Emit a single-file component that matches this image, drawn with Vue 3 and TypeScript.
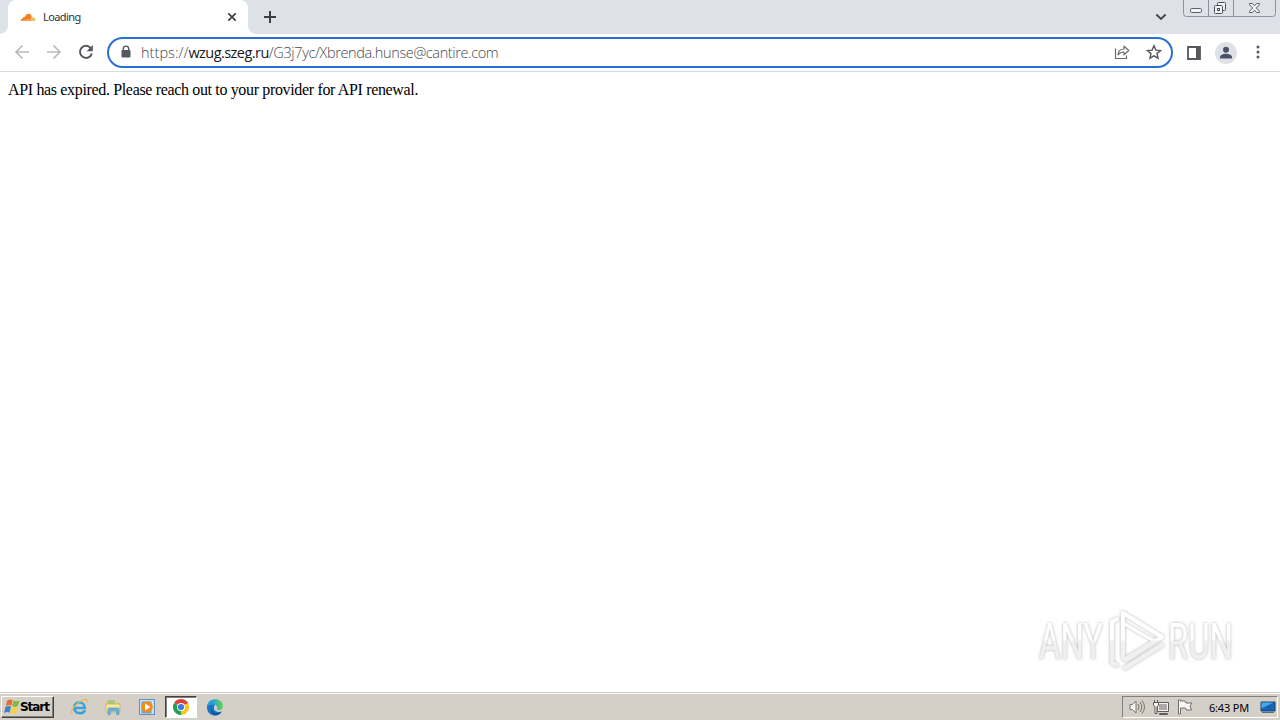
<script setup lang="ts">
const tabTitle: string = 'Loading'
const url = { scheme: 'https://', host: 'wzug.szeg.ru', path: '/G3j7yc/Xbrenda.hunse@cantire.com' }
const message: string = 'API has expired. Please reach out to your provider for API renewal.'
const clock: string = '6:43 PM'
</script>

<template>
  <div class="desktop">
    <header class="tabstrip">
      <div class="tab">
        <svg class="favicon" width="16" height="16" viewBox="0 0 16 16">
          <path d="M.8 11.8c-.1-1.6 1-2.5 2.3-2.5-.1-1.3 1-1.9 1.9-1.3C5.8 5.5 7.2 4.500 8.900 4.700c1.600.2 2.700 1.400 2.900 3L11 11.800Z" fill="#f38020" />
          <path d="M11.900 8.200c2-.2 3.600 1.200 3.500 3.600h-4.700l.4-1.200 2.500-.3-2.300-.4Z" fill="#faae40" />
          <path d="m4.800 10.600 6-.3" stroke="#f9b26b" stroke-width=".6" />
        </svg>
        <span class="tab-title">{{ tabTitle }}</span>
        <svg class="tab-close" width="10" height="10" viewBox="0 0 10 10"><path d="m1.300 1.300 7.400 7.400m0-7.400L1.300 8.700" stroke="#3c4043" stroke-width="1.700" /></svg>
      </div>
      <svg class="new-tab" width="14" height="14" viewBox="0 0 14 14"><path d="M7 1v12M1 7h12" stroke="#3c4043" stroke-width="2" /></svg>
      <svg class="chevron" width="12" height="8" viewBox="0 0 12 8"><path d="m1.400 1.500 4.600 4.400 4.600-4.400" fill="none" stroke="#45484d" stroke-width="2" /></svg>
      <svg class="window-controls" width="94" height="18" viewBox="0 0 94 18">
        <path d="M.5-1v14.500q0 3 3 3h86q3 0 3-3V-1M25.500 0v16M50.500 0v16" fill="none" stroke="#8d929c" />
        <rect x="7.500" y="8.500" width="11" height="4" rx="1.300" fill="#f2f3f6" stroke="#5b606b" />
        <g fill="#f2f3f6" stroke="#4b505b"><rect x="34.500" y="2.500" width="8" height="8" rx="1" /><rect x="31.500" y="5.500" width="8" height="8" rx="1" /><rect x="34.500" y="8.500" width="2" height="2" /></g>
        <path d="M66.500 3.500h3l2 2.300 2-2.300h3v1.200L73.300 8l3.200 3.300v1.200h-3l-2-2.300-2 2.300h-3v-1.200L69.700 8l-3.200-3.300Z" fill="#f2f3f6" stroke="#5b606b" />
      </svg>
    </header>

    <nav class="toolbar">
      <svg class="nav-icon" width="16" height="16" viewBox="0 0 16 16"><path d="M15 8H2m6.500-6.500L2 8l6.500 6.500" fill="none" stroke="#b8babd" stroke-width="1.700" /></svg>
      <svg class="nav-icon" width="16" height="16" viewBox="0 0 16 16"><path d="M1 8h13M7.500 1.500 14 8l-6.500 6.500" fill="none" stroke="#b8babd" stroke-width="1.700" /></svg>
      <svg class="nav-icon" width="16" height="16" viewBox="0 0 16 16"><path d="M13.800 9.400A6 6 0 1 1 12.600 4L14 5.400" fill="none" stroke="#55585c" stroke-width="2" /><path d="M14.800 1v6.200H8.600Z" fill="#55585c" /></svg>
      <div class="omnibox">
        <svg class="lock" width="10" height="14" viewBox="0 0 10 14"><path d="M2.300 6V3.800a2.700 2.700 0 0 1 5.400 0V6" fill="none" stroke="#55585c" stroke-width="1.400" /><rect x=".5" y="5" width="9" height="7.500" rx="1" fill="#55585c" /></svg>
        <span class="url"><span class="scheme">{{ url.scheme }}</span><b>{{ url.host }}</b>{{ url.path }}</span>
        <svg class="share" width="16" height="16" viewBox="0 0 16 16"><path d="M1.500 4.500v10h11v-3" fill="none" stroke="#696c70" stroke-width="1.200" /><path d="M4 10.800C4.300 7.200 6.500 5 10 5V2.200L14.800 6.500 10 10.800V8C7.300 8 5.400 8.900 4 10.800Z" fill="none" stroke="#696c70" stroke-width="1.200" stroke-linejoin="round" /></svg>
        <svg class="star" width="16" height="16" viewBox="0 0 16 16"><path d="m8 1.700 1.900 4.400 4.700.4-3.600 3.100 1.100 4.600L8 11.800l-4.100 2.400L5 9.600 1.400 6.500l4.700-.4Z" fill="none" stroke="#55585c" stroke-width="1.400" /></svg>
      </div>
      <svg class="panel" width="14" height="14" viewBox="0 0 14 14"><path d="M1 1h12v12H1Z" fill="none" stroke="#55585c" stroke-width="1.800" /><path d="M9 1h4v12H9Z" fill="#55585c" /></svg>
      <svg class="avatar" width="22" height="22" viewBox="0 0 22 22"><circle cx="11" cy="11" r="11" fill="#dee1e6" /><circle cx="11" cy="7.800" r="3" fill="#4b5268" /><path d="M5 16.500v-1.300c0-2.200 3.400-3.400 6-3.400s6 1.200 6 3.400v1.300Z" fill="#4b5268" /></svg>
      <svg class="menu" width="4" height="16" viewBox="0 0 4 16"><g fill="#55585c"><circle cx="2" cy="3" r="1.500" /><circle cx="2" cy="8" r="1.500" /><circle cx="2" cy="13" r="1.500" /></g></svg>
    </nav>

    <main class="page">
      <p>{{ message }}</p>
      <svg class="watermark" width="220" height="84" viewBox="0 0 220 84">
        <defs>
          <linearGradient id="fade" x1="0" y1="0" x2="0" y2="76" gradientUnits="userSpaceOnUse"><stop offset=".48" stop-color="#fff" /><stop offset=".51" stop-color="#f0f0f0" /></linearGradient>
          <filter id="glow" x="-10%" y="-20%" width="120%" height="140%"><feDropShadow dx="0" dy="0" stdDeviation="1.700" flood-color="#777" flood-opacity=".6" /></filter>
        </defs>
        <g filter="url(#glow)" fill="url(#fade)">
          <text x="8" y="56" textLength="64" lengthAdjust="spacingAndGlyphs">ANY</text>
          <text x="137" y="56" textLength="65" lengthAdjust="spacingAndGlyphs">RUN</text>
          <g fill="none" stroke="url(#fade)" stroke-width="4" stroke-linejoin="round" stroke-linecap="round">
            <path d="M92 55V10l39 24-36 23" /><path d="m92 20 31 18-28 17" stroke-width="3" /><path d="M86 16l-5 3v41l5 2M94 65l37-23" />
          </g>
        </g>
      </svg>
    </main>

    <footer class="taskbar">
      <div class="start">
        <svg width="17" height="16" viewBox="0 0 17 16">
          <path d="M4.200 1.500q3-1.700 5.500-.5L8.300 6.700Q5.500 5.300 2.800 7Z" fill="#ed6b2d" />
          <path d="M10.600 1.500q3 1.500 6 .1L15 7.100q-3 1.600-5.800-.1Z" fill="#83b842" />
          <path d="M2.500 7.900q2.700-1.700 5.500-.3l-1.400 6Q3.900 12.200 1 13.900Z" fill="#3d82c8" />
          <path d="M8.900 8q2.900 1.600 5.800.1l-1.400 5.800q-2.900 1.800-5.800 0Z" fill="#f8cf42" />
        </svg>
        <b>Start</b>
      </div>
      <div class="launchers">
        <div class="launcher">
          <svg width="18" height="18" viewBox="0 0 18 18"><path d="M15 12.300C13.400 16.500 4.200 16.500 4.200 9.400c0-6.700 10.600-6.700 10.600.5H5" fill="none" stroke="#35a3df" stroke-width="2.500" /><path d="M2.500 15.500C-1 13.500 6 5.500 12 2.500c4-2 5.800-1 4.500 2" fill="none" stroke="#e7b94d" stroke-width="1.300" /></svg>
        </div>
        <div class="launcher">
          <svg width="18" height="18" viewBox="0 0 18 18"><path d="M2 3h5l1.500 1.500H16V14H2Z" fill="#e8c96d" /><path d="M4 2h7v4H4Z" fill="#a6c981" /><path d="M2 6h14v8H2Z" fill="#f8e59f" stroke="#c9a95a" stroke-width=".7" /><path d="M4 16.500V11q0-1 1-1h9q1 0 1 1v5.500h-2.500V13h-6v3.500Z" fill="#68b7dd" stroke="#5291b1" stroke-width=".6" /></svg>
        </div>
        <div class="launcher">
          <svg width="18" height="18" viewBox="0 0 18 18"><rect x="1.500" y="1.500" width="15" height="15" fill="#c9e1f5" stroke="#5f91c2" /><rect x="3.500" y="3.500" width="10" height="12" fill="#69a4d8" /><circle cx="9" cy="9" r="5.800" fill="#f28b18" /><path d="m7 5.500 5.500 3.500L7 12.500Z" fill="#fff" /></svg>
        </div>
        <div class="launcher active">
          <svg width="18" height="18" viewBox="0 0 18 18"><path d="M9 9 2.070 5A8 8 0 0 1 15.930 5Z" fill="#df4337" /><path d="M9 9 15.930 5A8 8 0 0 1 9 17Z" fill="#f7c81d" /><path d="M9 9v8A8 8 0 0 1 2.070 5Z" fill="#289c51" /><path d="M9 5h6.930" stroke="#df4337" stroke-width="1" /><circle cx="9" cy="9" r="4" fill="#fff" /><circle cx="9" cy="9" r="3.100" fill="#3b7ddd" /></svg>
        </div>
        <div class="launcher">
          <svg width="18" height="18" viewBox="0 0 18 18"><defs><linearGradient id="edge"><stop offset=".3" stop-color="#229fd9" /><stop offset="1" stop-color="#67d553" /></linearGradient></defs><path d="M1 9C1 5 5 3 9 6L8 11c1 3 5 3.500 8 2.500A8 8 0 0 1 1 9Z" fill="#1877c5" /><path d="M1 8.500C2-1.500 17-.5 17 8.300c0 3.700-3.500 4.700-6.400 3.500 1.700-2 .5-5.200-3.100-5.400C4.500 6.200 2 7.500 1 8.500Z" fill="url(#edge)" /><path d="M6 8.500c-2 5 3.300 8.500 9 5.500C10.500 20 2.500 16 6 8.500Z" fill="#124f98" /><path d="M8.300 8.200c-1.500 3.500 2.500 5.500 7.200 4.500l1.500-1.800c-2 1.300-4.500 1.600-6.400.9C11.800 9.500 10 6.700 8.300 8.200Z" fill="#d4d0c8" /></svg>
        </div>
      </div>
      <div class="tray">
        <svg width="16" height="16" viewBox="0 0 16 16"><path d="M1 5.500h2.500L7 2v12l-3.500-3.500H1Z" fill="#f7f7f5" stroke="#77736e" /><path d="M9 5q2 3 0 6m2-8q3.500 5 0 10m2-11.500q5 6.500 0 13" fill="none" stroke="#77736e" /></svg>
        <svg class="network" width="18" height="17" viewBox="0 0 18 17"><path d="M4.500 3.500h11v9h-11z" fill="#f5f5f5" stroke="#605d59" /><path d="M6 5h8v6H6z" fill="#aaa" /><path d="M6.500 14.500h8v1h-8z" fill="#f5f5f5" stroke="#605d59" /><path d="M1.500 1v2m3-2v2M.500 3.500h5v3l-1.500 1v7H2v-7l-1.500-1Z" fill="#f5f5f5" stroke="#605d59" /></svg>
        <svg class="flag" width="17" height="16" viewBox="0 0 17 16"><path d="M1.500 1v14h2V9h5l1 2h5l-1.500-4L15 4H9L8 2H3.500V1Z" fill="#f7f7f5" stroke="#706c67" /></svg>
        <time>{{ clock }}</time>
        <svg class="show-desktop" width="16" height="14" viewBox="0 0 16 14"><path d="M1 2h14v9H1Z" fill="#1764b5" stroke="#194477" /><path d="M1.500 2.500h12l-12 6Z" fill="#4ca4e2" /><path d="M2 12.500h12" stroke="#58708f" /></svg>
      </div>
    </footer>
  </div>
</template>

<style>
body { margin: 0; overflow: hidden; }
</style>

<style scoped>
* { box-sizing: border-box; }
svg { display: block; flex: none; }
.desktop { width: 1280px; height: 720px; display: flex; flex-direction: column; background: #fff; overflow: hidden; font-family: "DejaVu Sans", sans-serif; }
.tabstrip { height: 34px; flex: none; display: flex; align-items: flex-start; padding-left: 8px; background: #dee1e8; }
.tab { position: relative; width: 240px; height: 34px; display: flex; align-items: center; padding: 0 11px 0 12px; background: #fff; border-radius: 8px 8px 0 0; }
.tab::before, .tab::after { content: ''; position: absolute; bottom: 0; width: 8px; height: 8px; }
.tab::before { left: -8px; background: radial-gradient(circle at 0 0, transparent 7.500px, #fff 8px); }
.tab::after { right: -8px; background: radial-gradient(circle at 100% 0, transparent 7.500px, #fff 8px); }
.tab-title { margin: 0 0 2px 7px; font: 11px "Noto Sans", sans-serif; letter-spacing: -.6px; color: #303238; }
.tab-close { margin-left: auto; }
.new-tab { margin: 10px 0 0 15px; }
.chevron { margin: 13px 16px 0 auto; }
.window-controls { margin-right: 3px; }
.toolbar { height: 38px; flex: none; display: flex; align-items: center; padding: 0 20px 0 14px; border-bottom: 1px solid #d9dbdf; }
.nav-icon { margin: 0 16px 1px 0; }
.nav-icon:nth-child(3) { margin-right: 13px; }
.omnibox { width: 1066px; height: 31px; border: 2px solid #2a70d3; border-radius: 16px; display: flex; align-items: center; padding: 0 9px 0 12px; }
.lock, .share, .star, .menu { margin-bottom: 1px; }
.url { margin-left: 10px; font: 300 14.500px "Open Sans", sans-serif; letter-spacing: -.375px; color: #44474d; white-space: nowrap; }
.url .scheme { letter-spacing: .05px; }
.url b { font-weight: 400; letter-spacing: -.55px; color: #16181c; }
.share { margin-left: auto; }
.star { margin-left: 16px; }
.panel { margin-left: 14px; }
.avatar { margin-left: 14px; }
.menu { margin-left: auto; }
.page { position: relative; flex: 1; padding: 9px 8px; }
.page p { margin: 0; font: 16px/18px "Liberation Serif", serif; letter-spacing: -.345px; color: #000; white-space: nowrap; }
.watermark { position: absolute; left: 1031px; top: 531px; overflow: visible; }
.watermark text { font: 400 50px/1.200 Roboto, sans-serif; }
.taskbar { height: 28px; flex: none; display: flex; align-items: center; padding: 1px 2px 0 1px; background: #d4d0c8; border-top: 1px solid #d4d0c8; box-shadow: inset 0 1px #fff; }
.start { width: 53px; height: 22px; display: flex; align-items: center; padding-left: 1px; border: 1px solid; border-color: #fff #404040 #404040 #fff; box-shadow: inset -1px -1px #808080; }
.start b { font: 700 12px "DejaVu Sans", sans-serif; letter-spacing: -1.050px; color: #000; }
.launchers { display: flex; gap: 2px; margin-left: 9px; }
.launcher { width: 32px; height: 22px; display: flex; align-items: center; justify-content: center; }
.active { background: #fff; border: 1px solid; border-color: #404040 #fff #fff #404040; box-shadow: inset 1px 1px #808080; }
.tray { width: 156px; height: 22px; margin-left: auto; display: flex; align-items: center; padding-left: 6px; border: 1px solid; border-color: #808080 #fff #fff #808080; }
.network { margin-left: 8px; }
.flag { margin-left: 6px; }
.tray time { margin-left: 15px; font: 11px "Noto Sans", sans-serif; letter-spacing: -.2px; color: #000; white-space: nowrap; }
.show-desktop { margin-left: auto; margin-right: 1px; }
</style>
